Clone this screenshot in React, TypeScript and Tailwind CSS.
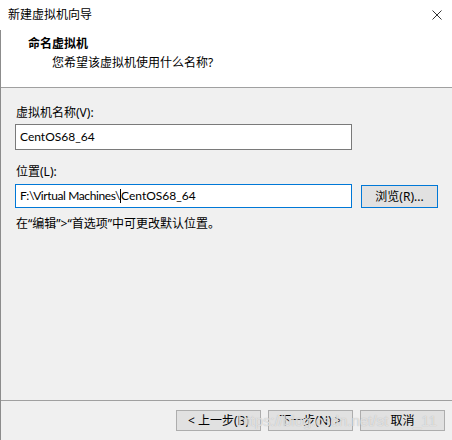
const font = "font-['Noto_Sans','Noto_Sans_CJK_SC',sans-serif]";

const WizardButton = ({ label }: { label: string }) => (
  <button className="w-[85px] h-[21px] border border-[#adadad] bg-[#e1e1e1] text-[12px] text-black leading-none flex items-center justify-center">
    {label}
  </button>
);

const App = () => {
  return (
    <div className={`w-[452px] h-[440px] bg-white relative overflow-hidden text-black ${font}`}>
      {/* title bar */}
      <div className="h-[30px] flex items-center justify-between pl-[8px] pr-[9px]">
        <span className="text-[12px] leading-4">新建虚拟机向导</span>
        <svg width="10" height="10" viewBox="0 0 10 10" className="mr-px">
          <path d="M0.5 0.5 L9.5 9.5 M9.5 0.5 L0.5 9.5" stroke="#333" strokeWidth="1" fill="none" />
        </svg>
      </div>

      <div className="h-[410px] border-l border-[#8c8c8c] flex flex-col">
        {/* header */}
        <div className="h-[58px] bg-white border-b border-[#a0a0a0] pl-[27px] pt-[6px]">
          <div className="text-[12px] leading-4 font-bold">命名虚拟机</div>
          <div className="text-[12px] leading-4 mt-[3px] pl-[24px]">您希望该虚拟机使用什么名称?</div>
        </div>

        {/* body */}
        <div className="flex-1 bg-[#f0f0f0] flex flex-col">
          <div className="flex-1 pl-[14px] pt-[17px]">
            <div className="text-[12px] leading-4 pl-px">虚拟机名称(V):</div>
            <div className="mt-[3px] w-[337px] h-[26px] bg-white border border-[#7a7a7a] flex items-center pl-[4px] text-[12px] font-['Lato',sans-serif]">
              CentOS68_64
            </div>

            <div className="text-[12px] leading-4 pl-px mt-[14px]">位置(L):</div>
            <div className="mt-[4px] flex items-start">
              <div className="w-[337px] h-[24px] bg-white border border-[#0078d7] flex items-center pl-[4px] text-[12px] font-['Lato',sans-serif]">
                <span className="tracking-[-0.4px]">{'F:\\Virtual Machines\\'}</span>
                <span className="inline-block w-px h-[14px] bg-black" />
                <span>CentOS68_64</span>
              </div>
              <button className="ml-[9px] mt-px w-[77px] h-[23px] border border-[#0078d7] bg-[#e1e1e1] text-[12px] leading-none flex items-center justify-center">
                浏览(R)...
              </button>
            </div>

            <div className="text-[12px] leading-4 pl-px mt-[8px]">在“编辑”&gt;“首选项”中可更改默认位置。</div>
          </div>

          {/* footer */}
          <div className="h-[40px] border-t border-[#a0a0a0] pt-[9px] pr-[7px] flex justify-end gap-[7px]">
            <WizardButton label="< 上一步(B)" />
            <WizardButton label="下一步(N) >" />
            <WizardButton label="取消" />
          </div>
        </div>
      </div>

      {/* csdn watermark */}
      <span className="absolute left-[238px] top-[411px] text-[15px] leading-5 font-['Liberation_Sans',sans-serif] text-white/60 [text-shadow:0_0_1px_#a8a8a8] pointer-events-none">
        https://blog.csdn.net/st
      </span>
      <span className="absolute left-[413px] top-[411px] text-[15px] leading-5 font-['Liberation_Sans',sans-serif] text-white/60 [text-shadow:0_0_1px_#a8a8a8] pointer-events-none">
        _11
      </span>
    </div>
  );
};

export default App;
